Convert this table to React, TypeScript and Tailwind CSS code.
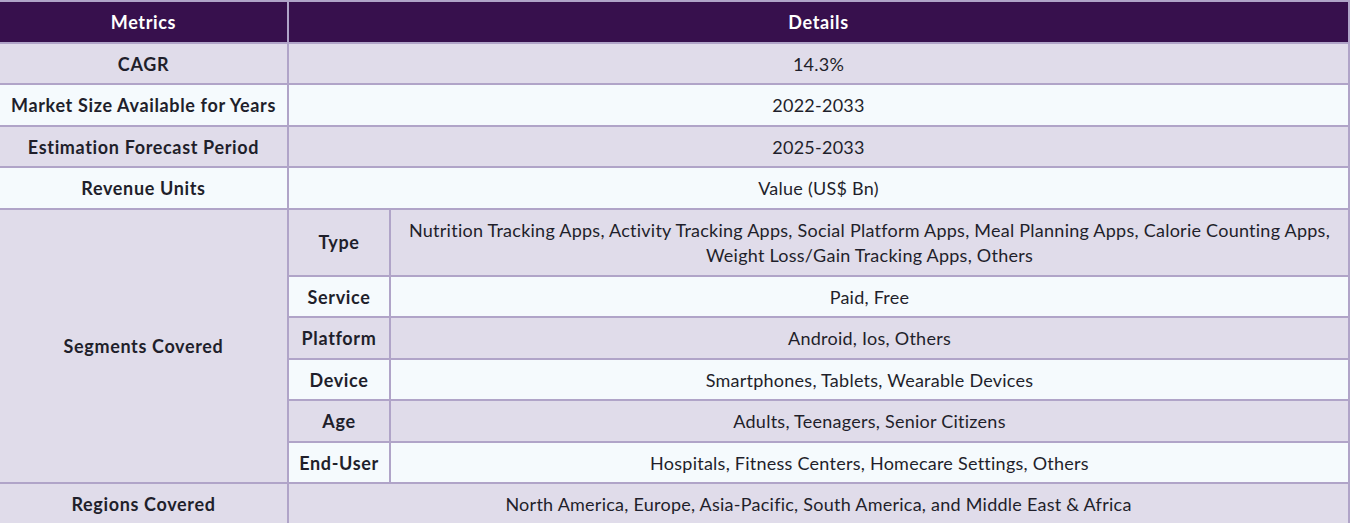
import React from "react";

interface Segment {
    name: string;
    value: string;
}

interface Metric {
    name: string;
    value: string;
}

const topMetrics: Metric[] = [
    { name: "CAGR", value: "14.3%" },
    { name: "Market Size Available for Years", value: "2022-2033" },
    { name: "Estimation Forecast Period", value: "2025-2033" },
    { name: "Revenue Units", value: "Value (US$ Bn)" },
];

const segments: Segment[] = [
    {
        name: "Type",
        value: "Nutrition Tracking Apps, Activity Tracking Apps, Social Platform Apps, Meal Planning Apps, Calorie Counting Apps, Weight Loss/Gain Tracking Apps, Others",
    },
    { name: "Service", value: "Paid, Free" },
    { name: "Platform", value: "Android, Ios, Others" },
    { name: "Device", value: "Smartphones, Tablets, Wearable Devices" },
    { name: "Age", value: "Adults, Teenagers, Senior Citizens" },
    { name: "End-User", value: "Hospitals, Fitness Centers, Homecare Settings, Others" },
];

const cell = "border-r-2 border-b-2 border-[#b0a4c8] text-center align-middle pt-[8px] pb-[6px] px-[8px] leading-[25.5px]";
const label = "font-bold tracking-[0.65px]";
const value = "tracking-[0.25px]";
const light = "bg-[#e0dcea]";
const white = "bg-[#f5fafd]";

const App: React.FC = () => {
    return (
        <div className="w-[1350px] bg-white text-[18px] text-[#1f1f2b] font-['Lato','Liberation_Sans',sans-serif]">
            <table className="w-full border-separate border-spacing-0 table-fixed">
                <colgroup>
                    <col className="w-[289px]" />
                    <col className="w-[102px]" />
                    <col />
                </colgroup>
                <thead>
                    <tr className="bg-[#37104d] text-white">
                        <th className={`${cell} ${label} border-t-2`}>Metrics</th>
                        <th colSpan={2} className={`${cell} ${label} border-t-2`}>
                            Details
                        </th>
                    </tr>
                </thead>
                <tbody>
                    {topMetrics.map((m, i) => (
                        <tr key={m.name} className={i % 2 === 0 ? light : white}>
                            <td className={`${cell} ${label}`}>{m.name}</td>
                            <td colSpan={2} className={`${cell} ${value}`}>
                                {m.value}
                            </td>
                        </tr>
                    ))}
                    {segments.map((s, i) => (
                        <tr key={s.name} className={i % 2 === 0 ? light : white}>
                            {i === 0 && (
                                <td rowSpan={segments.length} className={`${cell} ${light} ${label}`}>
                                    Segments Covered
                                </td>
                            )}
                            <td className={`${cell} ${label} px-0`}>{s.name}</td>
                            <td className={`${cell} ${value}`}>{s.value}</td>
                        </tr>
                    ))}
                    <tr className={light}>
                        <td className={`${cell} ${label}`}>Regions Covered</td>
                        <td colSpan={2} className={`${cell} ${value}`}>
                            North America, Europe, Asia-Pacific, South America, and Middle East &amp; Africa
                        </td>
                    </tr>
                </tbody>
            </table>
        </div>
    );
};

export default App;
